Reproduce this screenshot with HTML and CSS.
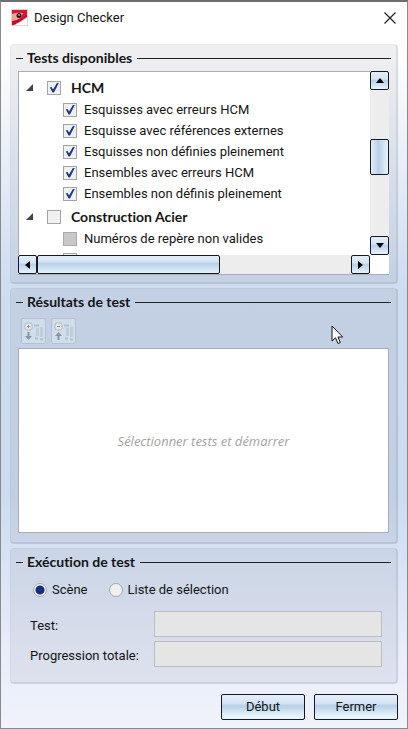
FILE: index.html
```
<!DOCTYPE html>
<html lang="fr">
<head>
  <meta charset="UTF-8" />
  <title>Design Checker</title>
  <link rel="stylesheet" href="styles.css">
</head>
<body>

<div class="window">
  <header class="titlebar">
    <svg class="logo" width="17" height="17" viewBox="0 0 17 17">
      <rect width="17" height="17" fill="#e0d4d6"/>
      <path d="M1 1h15v4L6 13l-5 2z" fill="#d8152f"/>
      <path d="M1 5q5-2 11-1l-2 5-4 2-5 2z" fill="#efa49c"/>
      <path d="M1 12q6 0 15-7v3Q9 13 3 16H1z" fill="#c80c26"/>
      <path d="M5 15q6-2 11-6v7H5z" fill="#fff"/>
      <circle cx="8" cy="6.500" r="2.500" fill="#2b1216"/>
      <circle cx="8" cy="6" r="1" fill="#999"/>
    </svg>
    <h1>Design Checker</h1>
    <button class="close" aria-label="Fermer la fenêtre">
      <svg width="12" height="12" viewBox="0 0 12 12"><path d="M.5.5l11 11M11.500.5l-11 11" stroke="#222" stroke-width="1.2"/></svg>
    </button>
  </header>

  <section class="panel">
    <h2><button class="fold" aria-label="Réduire"></button>Tests disponibles</h2>
    <div class="list">
      <div class="tree">
        <div class="group">
          <button class="arrow" aria-label="Réduire HCM"><svg width="7" height="7"><path d="M7 0v7H0z" fill="#444"/></svg></button>
          <label><input type="checkbox" checked>HCM</label>
        </div>
        <label class="item"><input type="checkbox" checked>Esquisses avec erreurs HCM</label>
        <label class="item"><input type="checkbox" checked>Esquisse avec références externes</label>
        <label class="item"><input type="checkbox" checked>Esquisses non définies pleinement</label>
        <label class="item"><input type="checkbox" checked>Ensembles avec erreurs HCM</label>
        <label class="item"><input type="checkbox" checked>Ensembles non définis pleinement</label>
        <div class="group">
          <button class="arrow" aria-label="Réduire Construction Acier"><svg width="7" height="7"><path d="M7 0v7H0z" fill="#444"/></svg></button>
          <label><input type="checkbox">Construction Acier</label>
        </div>
        <label class="item"><input type="checkbox" disabled>Numéros de repère non valides</label>
        <label class="item"><input type="checkbox"></label>
      </div>
      <div class="scroll vertical">
        <button class="step" aria-label="Haut"><svg width="8" height="5"><path d="M4 0l4 5H0z"/></svg></button>
        <div class="space-before"></div>
        <div class="thumb"></div>
        <div class="space-after"></div>
        <button class="step" aria-label="Bas"><svg width="8" height="5"><path d="M0 0h8L4 5z"/></svg></button>
      </div>
      <div class="scroll horizontal">
        <button class="step" aria-label="Gauche"><svg width="5" height="8"><path d="M5 0v8L0 4z"/></svg></button>
        <div class="thumb"></div>
        <div class="space-after"></div>
        <button class="step" aria-label="Droite"><svg width="5" height="8"><path d="M0 0l5 4-5 4z"/></svg></button>
      </div>
    </div>
  </section>

  <section class="panel">
    <h2><button class="fold" aria-label="Réduire"></button>Résultats de test</h2>
    <div class="toolbar">
      <button class="tool" disabled aria-label="Tout développer">
        <svg width="21" height="21" viewBox="0 0 21 21">
          <rect x="2" y="2" width="7" height="7" rx="2" fill="#e4e8ec" stroke="#b0b8c0"/>
          <path d="M4 5.500h3M5.500 4v3" stroke="#87909b"/>
          <path d="M5.500 11v5" stroke="#8795a5" stroke-width="2"/><path d="M2 15h7l-3.500 4z" fill="#8795a5"/>
          <path d="M11 4.500h5M12 17.500h3M17 18.500h3" stroke="#b2bfcd" stroke-width="2"/>
          <path d="M13 7h3v8h-3zM17 6h3v10h-3z" fill="#bfccd9"/>
        </svg>
      </button>
      <button class="tool" disabled aria-label="Tout réduire">
        <svg width="21" height="21" viewBox="0 0 21 21">
          <rect x="2" y="2" width="7" height="7" rx="2" fill="#e4e8ec" stroke="#b0b8c0"/>
          <path d="M4 5.500h3" stroke="#87909b"/>
          <path d="M5.500 14v5" stroke="#8795a5" stroke-width="2"/><path d="M2 15h7l-3.500-4z" fill="#8795a5"/>
          <path d="M11 4.500h5M12 17.500h3M17 18.500h3" stroke="#b2bfcd" stroke-width="2"/>
          <path d="M13 7h3v8h-3zM17 6h3v10h-3z" fill="#bfccd9"/>
        </svg>
      </button>
    </div>
    <div class="results">Sélectionner tests et démarrer</div>
    <svg class="pointer" width="13" height="20" viewBox="0 0 13 20"><path d="M1 1v15l3.500-3.200L7 18.500l2.300-1L7 12h4.700z" fill="#fff" stroke="#111"/></svg>
  </section>

  <section class="panel">
    <h2><button class="fold" aria-label="Réduire"></button>Exécution de test</h2>
    <div class="scope">
      <label><input type="radio" name="scope" checked>Scène</label>
      <label><input type="radio" name="scope">Liste de sélection</label>
    </div>
    <div class="fields">
      <label for="test">Test:</label>
      <input id="test" type="text" disabled>
      <label for="total">Progression totale:</label>
      <input id="total" type="text" disabled>
    </div>
  </section>

  <footer class="actions">
    <button class="action">Début</button>
    <button class="action">Fermer</button>
  </footer>
</div>

</body>
</html>
```
FILE: styles.css
```
* { box-sizing: border-box; }
body {
  margin: 0;
  font-family: Roboto, sans-serif;
  font-size: 13px;
  line-height: 18px;
  color: #151515;
}
button {
  padding: 0;
  border: none;
  background: none;
  font: inherit;
  color: inherit;
}
svg { display: block; }
.window {
  min-height: 100vh;
  padding: 0 9px 8px;
  border: 1px solid #8a8a8a;
  border-top: 2px solid #6e6e6e;
  background: linear-gradient(#fff 0, #fff 6%, #d0ddf0 38%, #cddcf0 68%, #e8edf9 90%, #f0f3fb);
}
.titlebar {
  display: flex;
  align-items: center;
  height: 42px;
  padding: 0 2px 11px 1px;
}
.titlebar h1 {
  flex: 1;
  margin: 0 0 0 6px;
  font-size: 13px;
  font-weight: normal;
}
.panel {
  position: relative;
  margin-bottom: 4px;
  padding: 4px 7px 7px;
  border: 1px solid rgba(0, 0, 0, 0.03);
  border-right: 2px solid rgba(70, 90, 120, 0.12);
  border-bottom: 2px solid rgba(70, 90, 120, 0.12);
  border-radius: 4px;
  background: rgba(60, 70, 90, 0.08);
}
.panel h2, .group {
  font-family: Lato, sans-serif;
  font-size: 14px;
  font-weight: bold;
  font-variant-ligatures: none;
}
.panel h2 {
  display: flex;
  align-items: center;
  margin: 0 -2px;
  line-height: 18px;
}
.panel h2::after {
  content: "";
  flex: 1;
  height: 1px;
  margin-left: 5px;
  background: #222;
}
.fold {
  width: 7px;
  height: 1px;
  margin-right: 4px;
  background: #222;
}

/* list of tests */
.list {
  display: grid;
  grid-template-columns: 1fr 19px;
  grid-template-rows: 183px 19px;
  margin-top: 4px;
  border: 1px solid #a9adb3;
  border-width: 1px 0 1px 1px;
  background: #fff;
}
.tree {
  padding-top: 4px;
  overflow: hidden;
}
.group {
  display: flex;
  align-items: center;
  height: 23px;
  padding-left: 7px;
}
.item + .group { margin-top: 1px; }
.arrow { margin-right: 14px; }
.group label {
  display: flex;
  align-items: center;
  gap: 10px;
}
.item {
  display: flex;
  align-items: center;
  gap: 7px;
  height: 21px;
  padding-left: 44px;
}
input[type="checkbox"] {
  appearance: none;
  width: 14px;
  height: 14px;
  margin: 0;
  border: 1px solid #a2a4a8;
  background: #f0f0f0;
}
input[type="checkbox"]:checked::before {
  content: "";
  display: block;
  width: 12px;
  height: 12px;
  background: #1d3a85;
  clip-path: polygon(15% 50%, 30% 45%, 42% 66%, 74% 12%, 90% 12%, 50% 92%, 38% 92%);
}
input[type="checkbox"]:disabled {
  border-color: #aaa;
  background: #c8c8c8;
}
.scroll {
  display: flex;
  background: #ededed;
}
.vertical {
  flex-direction: column;
  margin-top: -1px;
}
.step {
  display: flex;
  align-items: center;
  justify-content: center;
  width: 19px;
  height: 19px;
  border: 1px solid #161a20;
  border-radius: 2px;
  background: linear-gradient(#e2edf8 0, #d6e6f6 40%, #b9d0ea 50%, #e6f3fb);
}
.thumb {
  border: 1px solid #161a20;
  border-radius: 2px;
}
.vertical .thumb {
  height: 36px;
  background: linear-gradient(90deg, #e2edf8 0, #b9d0ea 45%, #e6f3fb);
}
.vertical .space-before { flex: 49; }
.vertical .space-after { flex: 61; }
.horizontal { margin-left: -1px; }
.horizontal .thumb {
  flex: 182;
  background: linear-gradient(#e2edf8 0, #d6e6f6 30%, #b9d0ea 45%, #e6f3fb);
}
.horizontal .space-after { flex: 132; }

/* results */
.toolbar {
  display: flex;
  gap: 5px;
  padding: 7px 3px 4px;
}
.tool {
  display: flex;
  align-items: center;
  justify-content: center;
  width: 25px;
  height: 26px;
  border: 1px solid #b4c1d2;
  border-radius: 2px;
  background: #d0deec;
}
.results {
  display: flex;
  align-items: center;
  justify-content: center;
  height: 185px;
  margin-bottom: 2px;
  border: 1px solid #a9adb3;
  background: #fff;
  color: #a3a3a3;
  font-family: "Open Sans", sans-serif;
  font-style: italic;
}
.pointer {
  position: absolute;
  top: 36px;
  right: 52px;
}

/* run */
.scope {
  display: flex;
  gap: 21px;
  padding: 10px 0 0 15px;
}
.scope label {
  display: flex;
  align-items: center;
  gap: 5px;
}
input[type="radio"] {
  appearance: none;
  width: 14px;
  height: 14px;
  margin: 0;
  border: 1px solid #a5a9af;
  border-radius: 50%;
  background: #f0f0f0;
}
input[type="radio"]:checked {
  background: radial-gradient(circle, #142f7c 4px, #f0f0f0 5px);
}
.fields {
  display: grid;
  grid-template-columns: 119px 1fr;
  gap: 4px 5px;
  align-items: center;
  padding: 12px 7px 8px 12px;
}
.fields label {
  padding-top: 4px;
  white-space: nowrap;
}
.fields input {
  width: 100%;
  height: 26px;
  border: 1px solid #bbbdc0;
  background: #e5e5e5;
}
.actions {
  display: flex;
  justify-content: flex-end;
  gap: 9px;
  padding-top: 6px;
}
.action {
  width: 84px;
  height: 26px;
  border: 1px solid #161a20;
  border-radius: 2px;
  background: linear-gradient(#e6f0fa 0, #d3e2f3 35%, #b8cfe9 45%, #e8f6fc 90%);
}
```
